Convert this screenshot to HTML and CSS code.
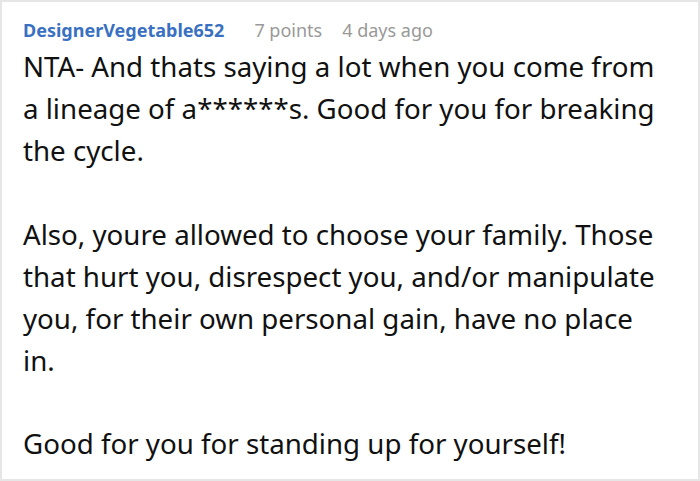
FILE: index.html
```html
<!DOCTYPE html>
<html lang="en">
<head>
<meta charset="utf-8">
<link rel="stylesheet" href="styles.css">
</head>
<body>
<div class="comment">
  <div class="meta">
    <span class="author">DesignerVegetable652</span>
    <span class="points">7 points</span>
    <span class="time">4 days ago</span>
  </div>
  <div class="body">
    <p>NTA- And thats saying a lot when you come from a lineage of a******s. Good for you for breaking the cycle.</p>
    <p>Also, youre allowed to choose your family. Those that hurt you, disrespect you, and/or manipulate you, for their own personal gain, have no place in.</p>
    <p>Good for you for standing up for yourself!</p>
  </div>
</div>
</body>
</html>
```

FILE: styles.css
```css
html, body {
  margin: 0;
  padding: 0;
  background: #fff;
}
.comment {
  box-sizing: border-box;
  width: 700px;
  height: 481px;
  border: 2px solid #e6e6e6;
  padding: 13px 33px 0 21px;
  font-family: "Noto Sans", "Open Sans", sans-serif;
  overflow: hidden;
}
.meta {
  display: flex;
  align-items: baseline;
  gap: 20px;
  font-size: 18px;
  line-height: 30px;
}
.author {
  color: #3a70c2;
  font-weight: 700;
  margin-right: 10px;
}
.points, .time {
  color: #999;
}
.body {
  font-size: 27.7px;
  line-height: 42.2px;
  color: #111;
}
.body p {
  margin: 0 0 41px 0;
}
```
